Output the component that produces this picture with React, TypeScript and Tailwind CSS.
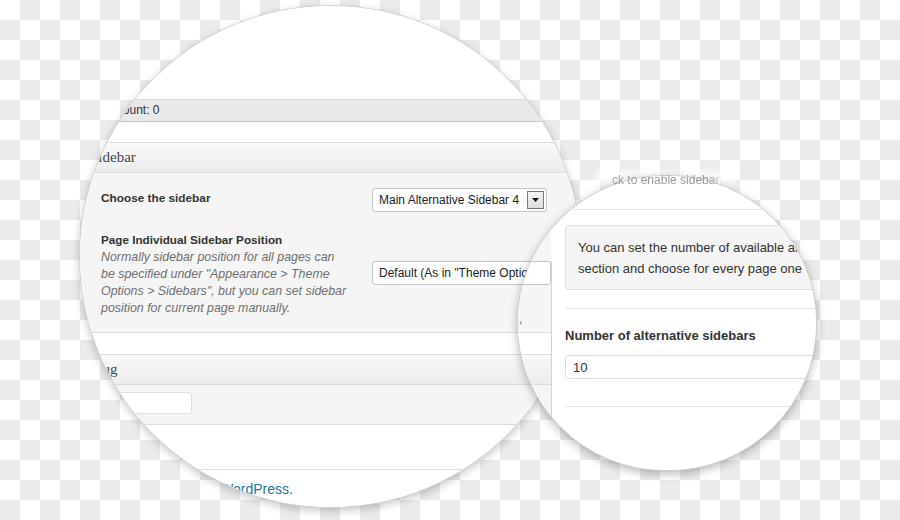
import React from "react";

const sans = "font-['Liberation_Sans',Arial,sans-serif]";

function Select({
  value,
  width,
  arrow,
  ghost,
}: {
  value: string;
  width: string;
  arrow?: boolean;
  ghost?: boolean;
}) {
  return (
    <div
      className={`${width} h-[24px] shrink-0 flex items-center justify-between rounded-[3px] border border-[#c4c4c4] bg-white pl-[6px] pr-[2px] text-[12px] whitespace-nowrap overflow-hidden ${
        ghost ? "text-transparent" : "text-[#222]"
      }`}
    >
      <span>{value}</span>
      {arrow && (
        <div className="w-[17px] h-[18px] border border-[#7a7a7a] bg-linear-to-b from-[#f4f4f4] to-[#dcdcdc] flex items-center justify-center">
          <svg width="7" height="4" viewBox="0 0 7 4">
            <path d="M0 0h7L3.5 4z" fill="#111" />
          </svg>
        </div>
      )}
    </div>
  );
}

// the post edit screen, in page coordinates
function EditPage({ ghost }: { ghost?: boolean }) {
  return (
    <div className={`w-[900px] h-[520px] bg-white pt-[99px] text-[12px] text-[#333] ${sans}`}>
      <div className="ml-[80px] w-[540px]">
        {/* word count bar */}
        <div className="h-[23px] border-t border-b border-t-[#dcdcdc] border-b-[#c6c6c6] bg-[#e9e9e9] pl-[5px] leading-[21px]">
          Word count: 0
        </div>

        {/* sidebar metabox */}
        <div className="mt-[20px] border-t border-b border-[#dcdcdc]">
          <div className="h-[30px] border-b border-[#dcdcdc] bg-linear-to-b from-[#f9f9f9] to-[#ececec] pl-[10px] font-['Liberation_Serif',serif] text-[15px] leading-[29px] text-[#464646]">
            Sidebar
          </div>
          <div className="h-[159px] bg-[#f5f5f5] pl-[21px] pt-[15px]">
            <div className="flex">
              <div className="w-[271px] mt-[2px] leading-[16px] font-bold text-[11.8px]">Choose the sidebar</div>
              <Select value="Main Alternative Sidebar 4" width="w-[175px]" arrow />
            </div>
            <div className="flex mt-[20px]">
              <div className="w-[271px]">
                <div className="leading-[16px] font-bold text-[11.7px]">Page Individual Sidebar Position</div>
                <div className="mt-[1px] leading-[17px] italic text-[12.4px] text-[#6f6f6f] whitespace-nowrap">
                  Normally sidebar position for all pages can
                  <br />
                  be specified under "Appearance &gt; Theme
                  <br />
                  Options &gt; Sidebars", but you can set sidebar
                  <br />
                  position for current page manually.
                </div>
              </div>
              <div className="mt-[29px]">
                <Select value={'Default (As in "Theme Options")'} width="w-[179px]" ghost={ghost} />
                <div className="ml-[147px] mt-[25px] text-[#666]">,</div>
              </div>
            </div>
          </div>
        </div>

        {/* slug metabox */}
        <div className="mt-[21px] border-t border-b border-[#dcdcdc]">
          <div className="h-[30px] border-b border-[#dcdcdc] bg-linear-to-b from-[#f9f9f9] to-[#ececec] pl-[10px] font-['Liberation_Serif',serif] text-[15px] leading-[29px] text-[#464646]">
            Slug
          </div>
          <div className="h-[39px] bg-[#f5f5f5] pl-[10px] pt-[7px]">
            <div className="w-[102px] h-[22px] rounded-[3px] border border-[#dfdfdf] bg-white"></div>
          </div>
        </div>
      </div>

      {/* footer */}
      <div className="mt-[44px] mx-[20px] border-t border-[#dcdcdc] pt-[11px] pl-[28px] text-[14px] leading-[17px] text-[#777]">
        Thank you for creating with <span className="text-[#21759b]">WordPress.</span>
      </div>
    </div>
  );
}

// theme options screen, shown in the small lens
function OptionsPage() {
  return (
    <div className={`w-[900px] h-[520px] flex bg-white ${sans}`}>
      <div className="w-[551px] shrink-0 overflow-hidden">
        <EditPage ghost />
      </div>
      <div className="w-px flex flex-col">
        <div className="h-[261px]"></div>
        <div className="flex-1 bg-[#d2d2d2]"></div>
      </div>
      <div className="flex-1 pl-[13px] text-[13px] text-[#333]">
        <div className="h-[210px] border-b border-[#e3e3e3]"></div>
        <div className="mt-[15px] w-[300px] rounded-[3px] border border-[#dedede] bg-[#f5f5f5] pl-[12px] pt-[11px] pb-[10px] leading-[21px] whitespace-nowrap">
          You can set the number of available alternative sidebars in this
          <br />
          section and choose for every page one of them.
        </div>
        <div className="mt-[18px] border-t border-[#e3e3e3] pt-[18px]">
          <div className="leading-[17px] font-bold">Number of alternative sidebars</div>
          <div className="mt-[11px] w-[300px] h-[24px] rounded-[3px] border border-[#dcdcdc] bg-white pl-[7px] leading-[23px]">
            10
          </div>
          <div className="mt-[27px] border-t border-[#e3e3e3]"></div>
        </div>
      </div>
    </div>
  );
}

export default function App() {
  return (
    <div className="relative w-[900px] h-[520px] overflow-hidden bg-[conic-gradient(#ebebeb_25%,#fff_0_50%,#ebebeb_0_75%,#fff_0)] bg-[length:40px_40px]">
      {/* big lens */}
      <div className="absolute left-[79px] top-[5px] w-[503px] h-[503px] rounded-full overflow-hidden border border-[#cdcdcd] bg-white shadow-[0_3px_8px_rgba(0,0,0,0.22)]">
        <div className="absolute left-[-80px] top-[-6px]">
          <EditPage />
        </div>
      </div>

      {/* faded label above the small lens */}
      <div className="absolute left-[596px] top-[170px] w-[140px] h-[16px] bg-white/70 blur-[3px]"></div>

      {/* small lens */}
      <div className="absolute left-[517px] top-[175px] w-[300px] h-[296px] rounded-full overflow-hidden border border-[#cdcdcd] bg-white shadow-[0_3px_10px_rgba(0,0,0,0.28)]">
        <div className="absolute left-[-518px] top-[-176px]">
          <OptionsPage />
        </div>
      </div>

      <div
        className={`absolute left-[590px] top-[173px] w-[145px] text-[12px] leading-[14px] text-[#9b9b9b] whitespace-nowrap ${sans} [mask-image:linear-gradient(to_right,transparent_0,transparent_20px,black_24px,black_122px,transparent_132px)]`}
      >
        Check to enable sidebars
      </div>
    </div>
  );
}
